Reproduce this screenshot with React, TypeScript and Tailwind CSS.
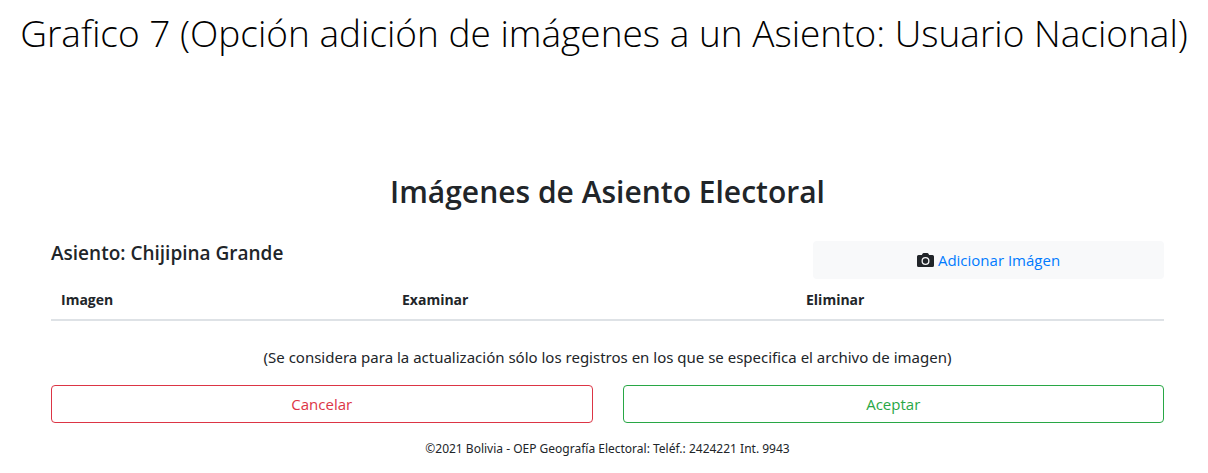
import React from "react";

function CameraIcon() {
  return (
    <svg viewBox="0 0 17 16" className="h-4 w-[17px]" aria-hidden="true">
      <path
        fill="#212529"
        fillRule="evenodd"
        d="M6.6 1h3.8q.6 0 .9.5L12.2 3h3.1A1.6 1.6 0 0 1 17 4.6v8.8a1.6 1.6 0 0 1-1.7 1.6H1.7A1.6 1.6 0 0 1 0 13.4V4.6A1.6 1.6 0 0 1 1.7 3h3.1l.9-1.5q.3-.5.9-.5ZM8.5 5a4 4 0 1 0 0 8 4 4 0 0 0 0-8Zm0 1.3a2.7 2.7 0 1 1 0 5.4 2.7 2.7 0 0 1 0-5.4Z"
      />
    </svg>
  );
}

export default function App() {
  return (
    <div className="min-h-screen bg-white font-['Open_Sans','Noto_Sans',sans-serif] text-[#212529]">
      <h1 className="pt-2 text-center text-[37px] leading-[50px] font-light text-black">
        Grafico 7 (Opción adición de imágenes a un Asiento: Usuario Nacional)
      </h1>
      <main className="pt-[110px] pr-[44px] pl-[51px]">
        <h2 className="text-center text-[30px] leading-[48px] font-semibold">Imágenes de Asiento Electoral</h2>
        <div className="mt-[25px] flex items-start justify-between">
          <h3 className="text-[19px] leading-6 font-semibold">Asiento: Chijipina Grande</h3>
          <button
            type="button"
            className="flex h-[38px] w-[351px] items-center justify-center gap-1 rounded bg-[#f8f9fa] text-[15px] text-[#007bff]"
          >
            <CameraIcon />
            Adicionar Imágen
          </button>
        </div>
        <table className="w-full table-fixed border-b-2 border-[#dee2e6] text-left text-sm">
          <thead>
            <tr>
              <th className="h-[41px] w-[341px] px-[10px] pt-[2px]">Imagen</th>
              <th className="w-[404px] px-[10px] pt-[2px]">Examinar</th>
              <th className="px-[10px] pt-[2px]">Eliminar</th>
            </tr>
          </thead>
        </table>
        <p className="mt-6 text-center font-['Noto_Sans',sans-serif] text-[15px] leading-6">
          (Se considera para la actualización sólo los registros en los que se especifica el archivo de imagen)
        </p>
        <div className="mt-4 grid grid-cols-2 gap-[30px] text-[15px]">
          <button type="button" className="h-[38px] rounded border border-[#dc3545] text-[#dc3545]">
            Cancelar
          </button>
          <button type="button" className="h-[38px] rounded border border-[#28a745] text-[#28a745]">
            Aceptar
          </button>
        </div>
        <footer className="mt-4 text-center font-['Noto_Sans',sans-serif] text-xs leading-5">
          ©2021 Bolivia - OEP Geografía Electoral: Teléf.: 2424221 Int. 9943
        </footer>
      </main>
    </div>
  );
}
